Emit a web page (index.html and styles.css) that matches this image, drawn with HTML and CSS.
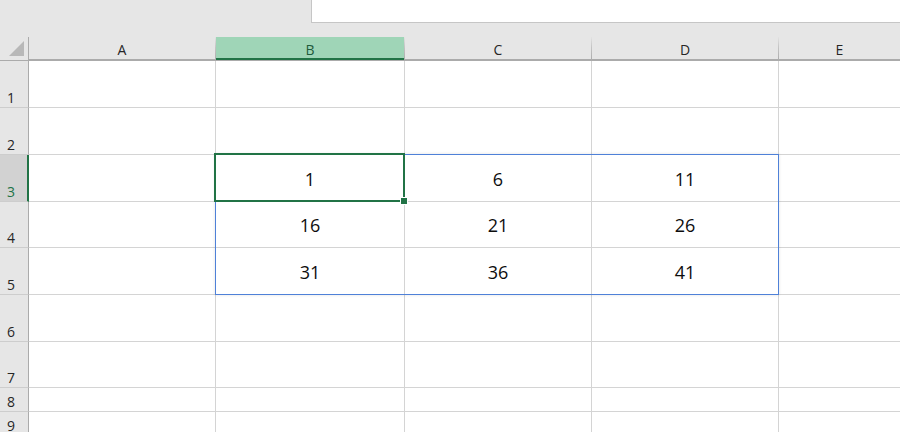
FILE: index.html
```html
<!DOCTYPE html>
<html lang="en">
<head>
  <meta charset="UTF-8">
  <title>Sheet1</title>
  <link rel="stylesheet" href="styles.css">
</head>
<body>

  <!-- formula bar strip -->
  <div class="topbar">
    <div class="formula"></div>
  </div>

  <div class="sheet">
    <div class="corner"><span class="tri"></span></div>
    <div class="colhead">A</div>
    <div class="colhead active">B</div>
    <div class="colhead">C</div>
    <div class="colhead">D</div>
    <div class="colhead last">E</div>

    <div class="rowhead">1</div>
    <div class="cell"></div><div class="cell"></div><div class="cell"></div><div class="cell"></div><div class="cell last"></div>

    <div class="rowhead">2</div>
    <div class="cell"></div><div class="cell"></div><div class="cell"></div><div class="cell"></div><div class="cell last"></div>

    <div class="rowhead active">3</div>
    <div class="cell"></div><div class="cell num">1</div><div class="cell num">6</div><div class="cell num">11</div><div class="cell last"></div>

    <div class="rowhead">4</div>
    <div class="cell"></div><div class="cell num">16</div><div class="cell num">21</div><div class="cell num">26</div><div class="cell last"></div>

    <div class="rowhead">5</div>
    <div class="cell"></div><div class="cell num">31</div><div class="cell num">36</div><div class="cell num">41</div><div class="cell last"></div>

    <div class="rowhead">6</div>
    <div class="cell"></div><div class="cell"></div><div class="cell"></div><div class="cell"></div><div class="cell last"></div>

    <div class="rowhead">7</div>
    <div class="cell"></div><div class="cell"></div><div class="cell"></div><div class="cell"></div><div class="cell last"></div>

    <div class="rowhead">8</div>
    <div class="cell"></div><div class="cell"></div><div class="cell"></div><div class="cell"></div><div class="cell last"></div>

    <div class="rowhead">9</div>
    <div class="cell"></div><div class="cell"></div><div class="cell"></div><div class="cell"></div><div class="cell last"></div>

    <!-- selection overlays -->
    <div class="range"></div>
    <div class="active-cell"><span class="handle"></span></div>
  </div>

</body>
</html>
```

FILE: styles.css
```css
body {
  margin: 0;
  background: #fff;
  font-family: "Open Sans", "Noto Sans", sans-serif;
  overflow: hidden;
  width: 900px;
  height: 432px;
}

.topbar {
  height: 37px;
  background: #e6e6e6;
  display: flex;
  justify-content: flex-end;
  align-items: flex-start;
}
.formula {
  width: 588px;
  height: 22px;
  background: #fff;
  border-left: 1px solid #c6c6c6;
  border-bottom: 1px solid #c6c6c6;
}

.sheet {
  position: relative;
  display: grid;
  grid-template-columns: 29px 187px 189px 187px 187px 1fr;
  grid-template-rows: 24px 47px 47px 47px 46px 47px 47px 46px 24px 24px;
}

.corner {
  background: #e6e6e6;
  border-right: 1px solid #ababab;
  border-bottom: 1px solid #ababab;
  position: relative;
}
.tri {
  position: absolute;
  left: 9px;
  top: 4px;
  width: 0;
  height: 0;
  border-left: 15px solid transparent;
  border-bottom: 15px solid #b8b8b8;
}

.colhead {
  background: #e6e6e6;
  border-bottom: 1px solid #ababab;
  border-right: 1px solid transparent;
  border-image: linear-gradient(to bottom, #e6e6e6 0%, #c4c4c4 45%, #aaaaaa 100%) 1;
  border-top: 0;
  border-left: 0;
  box-shadow: inset 0 -1px 0 #ababab;
  font-size: 14px;
  color: #262626;
  display: flex;
  align-items: center;
  justify-content: center;
  padding-top: 1px;
}
.colhead.active {
  background: #9fd5b7;
  color: #1f5b3c;
  box-shadow: inset 0 -2px 0 #217346;
}
.colhead.last {
  border-image: none;
  border-right: 0;
}

.rowhead {
  background: #e6e6e6;
  border-right: 1px solid #ababab;
  border-bottom: 1px solid #cdcdcd;
  font-size: 14px;
  color: #262626;
  display: flex;
  align-items: flex-end;
  padding-left: 7px;
  padding-bottom: 2px;
  line-height: 1;
}
.rowhead.active {
  background: #d2d2d2;
  color: #217346;
  border-right: 2px solid #217346;
}

.cell {
  border-right: 1px solid #d4d4d4;
  border-bottom: 1px solid #d4d4d4;
}
.cell.last {
  border-right: 0;
}
.num {
  font-size: 18px;
  color: #0d0d0d;
  display: flex;
  align-items: center;
  justify-content: center;
  padding-top: 1px;
}

.range {
  position: absolute;
  left: 215px;
  top: 117px;
  width: 564px;
  height: 141px;
  box-sizing: border-box;
  border: 1px solid #4f81d8;
  box-shadow: 0 0 3px rgba(0, 0, 0, 0.12);
}
.active-cell {
  position: absolute;
  left: 214px;
  top: 116px;
  width: 191px;
  height: 49px;
  box-sizing: border-box;
  border: 2px solid #217346;
}
.handle {
  position: absolute;
  right: -5px;
  bottom: -5px;
  width: 6px;
  height: 6px;
  background: #217346;
  border: 1px solid #fff;
}
```
